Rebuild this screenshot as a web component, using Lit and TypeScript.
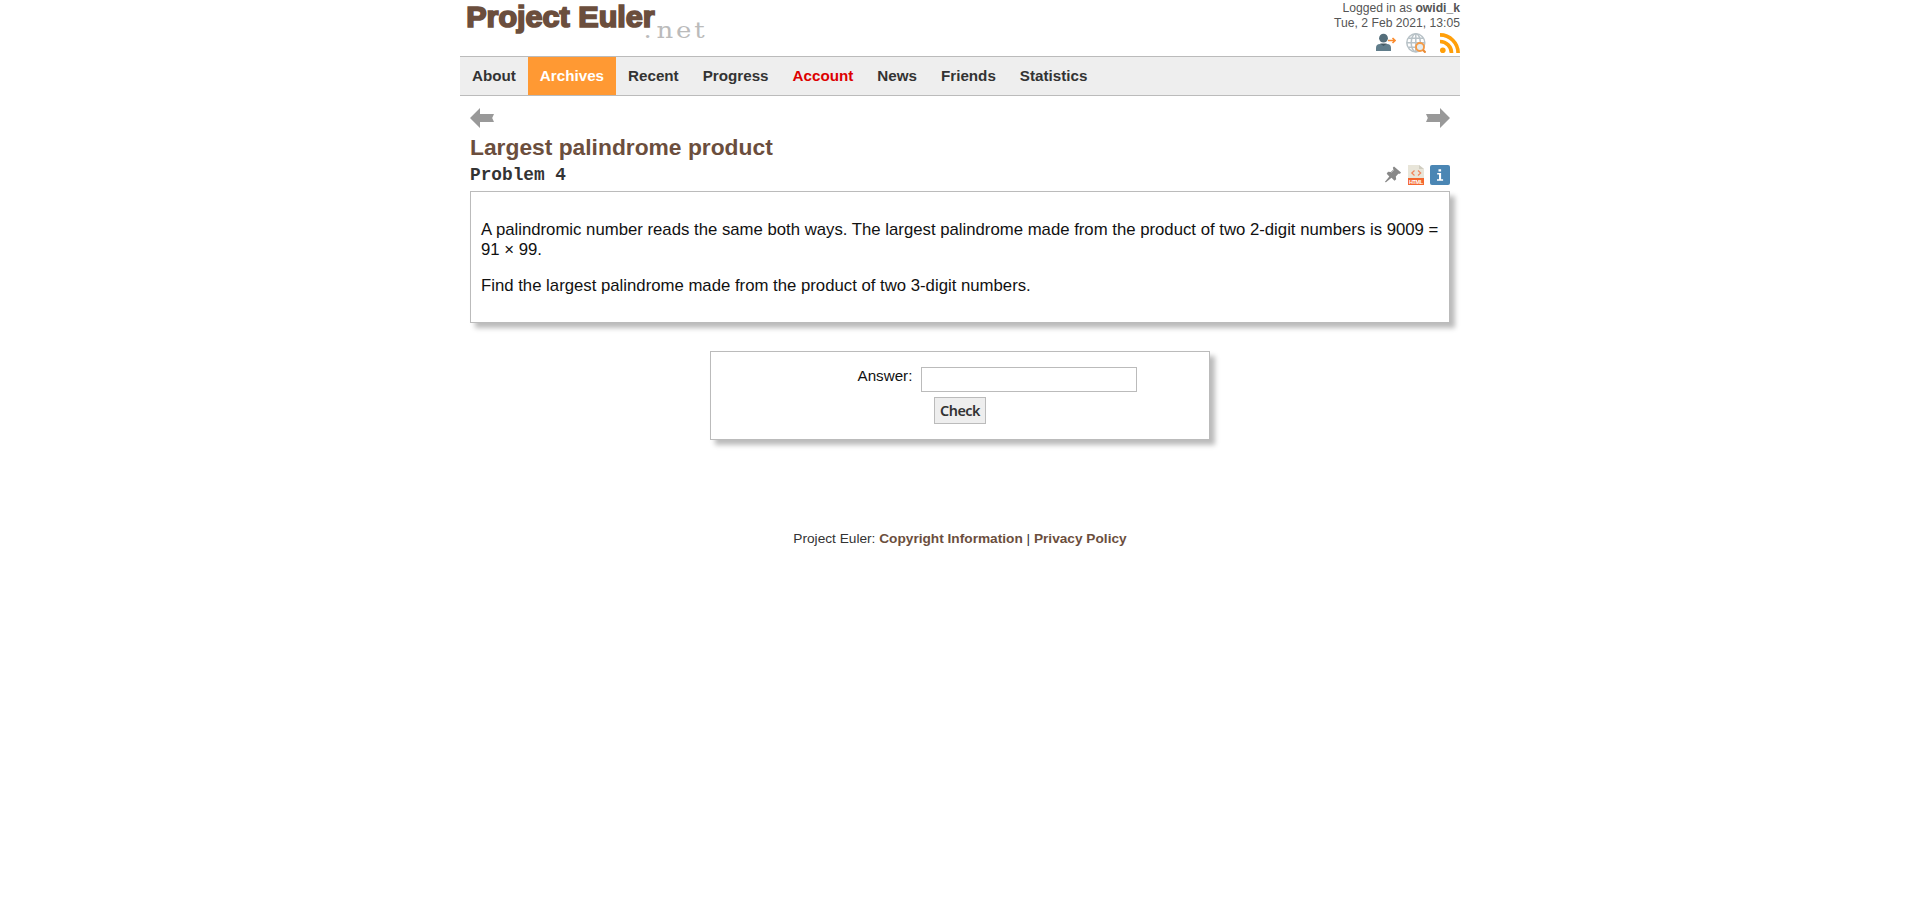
import { LitElement, html, css } from "lit";
import { customElement } from "lit/decorators.js";

@customElement("app-root")
class AppRoot extends LitElement {
  static styles = css`
    :host { display: block; background: #fff; min-height: 902px; color: #333; font: 15.2px/18px "Liberation Sans", Arial, sans-serif; }
    * { box-sizing: border-box; }
    a { color: inherit; text-decoration: none; }
    svg { display: block; }
    .container { width: 1000px; margin: 0 auto; }
    header { height: 56px; display: flex; justify-content: space-between; }
    .logo { margin: 0 0 0 5px; overflow: visible; }
    .word { font-family: "Liberation Sans", Arial, sans-serif; font-weight: 700; font-size: 29.5px; fill: #6b4e3d; stroke: #6b4e3d; stroke-width: 1.7; }
    .net { font-family: "DejaVu Serif", serif; font-size: 22px; fill: #bbb; }
    .info { text-align: right; font-size: 12.16px; line-height: 15px; padding-top: 1px; color: #555; display: flex; flex-direction: column; align-items: flex-end; }
    .icons { display: flex; gap: 10px; margin-top: 2px; }
    .icons .rss { margin-left: 4px; }
    nav { height: 40px; background: #eee; border-top: 1px solid #bbb; border-bottom: 1px solid #bbb; display: flex; font-weight: 700; }
    nav a { padding: 0 12px; line-height: 38px; }
    nav .current { background: #f93; color: #fff; }
    nav .account { color: #d00; }
    main { padding: 0 10px; }
    .arrows { display: flex; justify-content: space-between; padding-top: 12px; height: 38px; }
    h2 { margin: 0; font-size: 22.8px; line-height: 27px; color: #6b4e3d; }
    .row { display: flex; justify-content: space-between; height: 30px; }
    h3 { margin: 0; font: 700 17.8px/28px "Liberation Mono", monospace; }
    .tools { display: flex; gap: 6px; padding-top: 4px; }
    .problem { height: 132px; padding: 28px 6px 0 10px; font-size: 16.74px; line-height: 20px; color: #111; border: 1px solid #bbb; box-shadow: 5px 5px 5px #bbb; }
    .problem p { margin: 0 0 16px; }
    form { width: 500px; height: 89px; margin: 28px auto 0; border: 1px solid #bbb; box-shadow: 5px 5px 5px #bbb; color: #111; display: flex; flex-direction: column; align-items: center; padding-top: 15px; }
    .field { width: 498px; display: flex; padding-left: 146.500px; gap: 8.500px; }
    input { width: 216px; height: 25px; border: 1px solid #bbb; background: #fff; padding: 2px; margin: 0; }
    button { width: 52px; height: 27px; margin-top: 5px; padding: 0; border: 1px solid #bbb; background: #eee; color: #333; font: 600 14.4px/25px "Noto Sans", sans-serif; letter-spacing: -0.5px; }
    footer { margin-top: 91px; text-align: center; font-size: 13.68px; line-height: 16px; }
    footer a { color: #6b4e3d; font-weight: 700; }
    .format { font: 700 5.5px "Liberation Sans", sans-serif; fill: #fff; }
  `;

  render() {
    const nav = ["About", "Archives", "Recent", "Progress", "Account", "News", "Friends", "Statistics"];
    return html`<div class="container">
      <header>
        <svg class="logo" width="250" height="46">
          <text class="word" x="1.200" y="26.700" textLength="188.500" lengthAdjust="spacingAndGlyphs">Project Euler</text>
          <text class="net" transform="translate(178 37.500) scale(1.180 1)" x="0.500 11.500 28 43.500" y="0">.net</text>
        </svg>
        <div class="info">
          <div>Logged in as <strong>owidi_k</strong></div>
          <div>Tue, 2 Feb 2021, 13:05</div>
          <div class="icons">
            <svg width="20" height="20" viewBox="0 0 20 20"><circle cx="7.500" cy="5.200" r="4.400" fill="#546e7a"/><path d="M0 18v-3q0-4 4-4h7q4 0 4 4v3z" fill="#607d8b"/><path d="m4 10.500 3.500 2.500 3.500-2.500z" fill="#455a64"/><path d="M12 7.500h7M16.500 5l2.500 2.500-2.500 2.500" fill="none" stroke="#fb8c2e" stroke-width="1.600"/></svg>
            <svg width="20" height="20" viewBox="0 0 20 20"><g fill="none" stroke="#b8c2c7" stroke-width="1.500"><circle cx="9.800" cy="9.800" r="9"/><ellipse cx="9.800" cy="9.800" rx="4.600" ry="9"/><path d="M9.800 1v18M1 9.800h18M2.500 5.300h15M2.500 14.300h15"/></g><circle cx="14" cy="14" r="4" fill="#e4ecef" stroke="#f59a45" stroke-width="1.900"/><path d="m17 17 2.600 2.600" stroke="#e98b35" stroke-width="2.200"/></svg>
            <svg class="rss" width="20" height="20" viewBox="0 0 20 20"><circle cx="2.800" cy="17.200" r="2.800" fill="#ff9f0a"/><path d="M0 8.500A11.500 11.500 0 0 1 11.500 20M0 1.900A18.100 18.100 0 0 1 18.100 20" fill="none" stroke="#ff9f0a" stroke-width="3.700"/></svg>
          </div>
        </div>
      </header>
      <nav>${nav.map((n) => html`<a class=${n === "Archives" ? "current" : n === "Account" ? "account" : ""}>${n}</a>`)}</nav>
      <main>
        <div class="arrows">
          <svg width="24" height="20"><path d="M0 10 10 0v6h14l-1.800 4 1.800 4H10v6z" fill="#999"/></svg>
          <svg width="24" height="20"><path d="M24 10 14 0v6H0l1.800 4L0 14h14v6z" fill="#999"/></svg>
        </div>
        <h2>Largest palindrome product</h2>
        <div class="row">
          <h3>Problem 4</h3>
          <div class="tools">
            <svg width="18" height="20"><path d="M10 1.500 17 7.500l-1 1.300-1.700-.1-2.500 2.700.4 2.800-1.700 1.500-3-3L2 17.300l-1.200-.3 4.500-5.500-2.600-2.800L4 6.700l2.800.4 2.700-2.700-.7-1.700z" fill="#888"/><path d="m9.800 5-2.700 2.800" stroke="#bbb"/></svg>
            <svg width="16" height="20"><path d="M0 0h11l5 4v16H0z" fill="#e8e5d9"/><path d="M11 0v4h5z" fill="#d0cdc0"/><path d="M0 13h16v7H0z" fill="#f4672f"/><path d="m6.500 5.500-2.700 2.500 2.700 2.500m3.500-5 2.700 2.500-2.700 2.500" fill="none" stroke="#f2855b" stroke-width="1.200"/><text class="format" x="1" y="18.500" textLength="14">HTML</text></svg>
            <svg width="20" height="20"><rect width="20" height="20" rx="2" fill="#4a86b4"/><path d="M8.500 4.300h2.600v2.200H8.500zM7.200 8h3.900v6.300h2v1.400H7v-1.400h2V9.400H7.200z" fill="#fff"/></svg>
          </div>
        </div>
        <section class="problem">
          <p>A palindromic number reads the same both ways. The largest palindrome made from the product of two 2-digit numbers is 9009 = 91&nbsp;×&nbsp;99.</p>
          <p>Find the largest palindrome made from the product of two 3-digit numbers.</p>
        </section>
        <form>
          <label class="field">Answer:<input type="text" /></label>
          <button type="button">Check</button>
        </form>
      </main>
      <footer>Project Euler: <a>Copyright Information</a> | <a>Privacy Policy</a></footer>
    </div>`;
  }
}
